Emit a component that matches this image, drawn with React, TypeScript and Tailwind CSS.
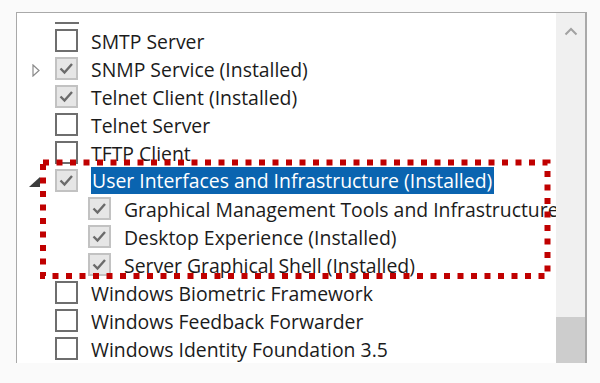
import React from 'react';

type Item = {
    label: string;
    checked: boolean;
    level: 0 | 1;
    expander?: 'collapsed' | 'expanded';
    selected?: boolean;
};

const ITEMS: Item[] = [
    { label: 'SMTP Server', checked: false, level: 0 },
    { label: 'SNMP Service (Installed)', checked: true, level: 0, expander: 'collapsed' },
    { label: 'Telnet Client (Installed)', checked: true, level: 0 },
    { label: 'Telnet Server', checked: false, level: 0 },
    { label: 'TFTP Client', checked: false, level: 0 },
    { label: 'User Interfaces and Infrastructure (Installed)', checked: true, level: 0, expander: 'expanded', selected: true },
    { label: 'Graphical Management Tools and Infrastructure (Installed)', checked: true, level: 1 },
    { label: 'Desktop Experience (Installed)', checked: true, level: 1 },
    { label: 'Server Graphical Shell (Installed)', checked: true, level: 1 },
    { label: 'Windows Biometric Framework', checked: false, level: 0 },
    { label: 'Windows Feedback Forwarder', checked: false, level: 0 },
    { label: 'Windows Identity Foundation 3.5', checked: false, level: 0 },
];

function CheckBox({ checked }: { checked: boolean }) {
    if (!checked) {
        return <div className="w-[23px] h-[23px] mt-[1px] shrink-0 border-2 border-[#6e6e6e] bg-white" />;
    }
    return (
        <div className="w-[23px] h-[23px] mt-[1px] shrink-0 border-2 border-[#c2c2c2] bg-[#e6e6e6] flex items-center justify-center">
            <svg width="19" height="19" viewBox="0 0 19 19" fill="none">
                <path d="M3.5 9.5 L7.5 13.5 L15 5" stroke="#6b6b6b" strokeWidth="2.4" />
            </svg>
        </div>
    );
}

function Expander({ kind }: { kind?: 'collapsed' | 'expanded' }) {
    if (kind === 'collapsed') {
        return (
            <svg width="8" height="13" viewBox="0 0 8 13" className="mt-[8px]">
                <path d="M1 1 L7 6.5 L1 12 Z" fill="none" stroke="#8a8a8a" strokeWidth="1.2" />
            </svg>
        );
    }
    if (kind === 'expanded') {
        return (
            <svg width="11" height="10" viewBox="0 0 11 10" className="mt-[9px]">
                <path d="M11 0 L11 10 L0 10 Z" fill="#3c3c3c" />
            </svg>
        );
    }
    return null;
}

function Row({ item }: { item: Item }) {
    return (
        <div className="flex items-start h-[28px] whitespace-nowrap">
            <div className={`${item.level === 0 ? 'w-[38px]' : 'w-[71px]'} shrink-0 flex justify-end pr-[15px]`}>
                <Expander kind={item.expander} />
            </div>
            <CheckBox checked={item.checked} />
            {item.selected ? (
                <div className="ml-[13px] mt-[-1px] h-[27px] leading-[27px] bg-[#0a64b0] text-white pl-[1px] pr-[2px]">
                    {item.label}
                </div>
            ) : (
                <div className="ml-[13px] h-[28px] leading-[28px] text-[#1b1b1b]">{item.label}</div>
            )}
        </div>
    );
}

export default function App() {
    return (
        <div
            className="relative w-[600px] h-[383px] bg-[#fafafa] pt-[12px] pl-[16px] overflow-hidden"
            style={{ fontFamily: '"Open Sans", "Noto Sans", sans-serif' }}
        >
            <div className="w-[571px] h-[351px] border-t border-l border-r-2 border-[#a9a9a9] bg-white flex">
                {/* список компонентов */}
                <div className="flex-1 overflow-hidden text-[19.4px]">
                    <div className="h-[15px] pl-[38px] pt-[9px]">
                        <div className="w-[24px] h-[2px] bg-[#6e6e6e]" />
                    </div>
                    {ITEMS.map((it) => (
                        <Row key={it.label} item={it} />
                    ))}
                </div>

                {/* полоса прокрутки */}
                <div className="w-[29px] shrink-0 bg-[#f0f0f0] flex flex-col">
                    <div className="h-[30px] flex items-center justify-center pt-[6px]">
                        <svg width="14" height="9" viewBox="0 0 14 9" fill="none">
                            <path d="M1.5 7.5 L7 2 L12.5 7.5" stroke="#a2a2a2" strokeWidth="2" />
                        </svg>
                    </div>
                    <div className="flex-1" />
                    <div className="h-[46px] bg-[#cdcdcd]" />
                </div>
            </div>

            {/* пунктирная рамка выделения */}
            <svg className="absolute left-0 top-0 pointer-events-none" width="600" height="383">
                <rect
                    x="43"
                    y="162.5"
                    width="504.5"
                    height="113.5"
                    fill="none"
                    stroke="#c00000"
                    strokeWidth="6"
                    strokeDasharray="6 7.5"
                />
            </svg>
        </div>
    );
}
